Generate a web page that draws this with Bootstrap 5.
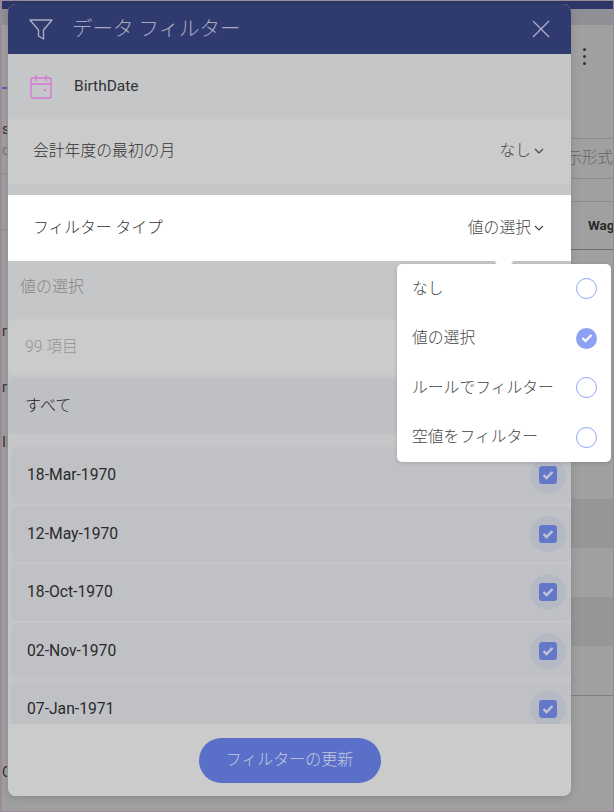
<!DOCTYPE html>
<html lang="ja">
<head>
  <meta charset="UTF-8">
  <title>データ フィルター</title>
  <link rel="stylesheet" href="https://cdn.jsdelivr.net/npm/bootstrap@5.3.0/dist/css/bootstrap.min.css">
  <style>
    html, body { height: 100%; }
    body { background: #a0a0a0; font-family: Roboto, "Noto Sans CJK JP", sans-serif; overflow: hidden; }
    .screen { position: relative; width: 614px; height: 812px; border: 1px solid #9a8a9a; border-left-width: 2px; overflow: hidden; }
    .back-top { height: 8px; background: #2c3768; }
    .back-sub { height: 16px; background: #8f9095; }

    /* what shows on both sides of the dialog */
    .side-left { width: 5px; font-size: 14px; line-height: 18px; color: #333; white-space: nowrap; }
    .side-right { width: 42px; white-space: nowrap; }
    .blue-tick { height: 2px; background: #5566b8; margin-top: 62px; }
    .left-s { margin-top: 31px; }
    .left-c { margin-top: 3px; color: #777; }
    .left-line { border-top: 1px solid #8c8c8c; margin-top: 14px; }
    .left-line2 { border-top: 1px solid #8c8c8c; margin-top: 55px; }
    .left-n1 { margin-top: 92px; }
    .left-n2 { margin-top: 38px; }
    .left-id { margin-top: 37px; }
    .left-o { margin-top: 312px; }
    .side-band { height: 113px; padding: 23px 0 0 12px; }
    .menu-dot { display: block; width: 3px; height: 3px; border-radius: 50%; background: #333; margin-bottom: 4px; }
    .right-a { height: 40px; border-top: 1px solid #8c8c8c; font-size: 15.500px; font-weight: 300; color: #666; }
    .right-b { height: 23px; border-top: 1px solid #8c8c8c; }
    .right-c { height: 48px; border-top: 1px solid #8c8c8c; padding-left: 17px; font-size: 13.500px; font-weight: 700; color: #2a2a2a; }
    .right-d { height: 201px; border-top: 1px solid #6e6e6e; }
    .stripe-a { height: 49px; background: #a0a0a0; }
    .stripe-b { height: 49px; background: #969696; }
    .stripe-end { border-top: 1px solid #808080; }

    .dialog { position: absolute; left: 6px; top: 3px; width: 563px; height: 792px; background: #c5c6c8; border-radius: 8px; overflow: hidden; box-shadow: 0 2px 8px rgba(0,0,0,.15); }
    .dlg-head { height: 50px; background: #2f3a6e; color: #a9acc0; padding: 0 21px 0 20px; }
    .dlg-title { font-size: 20.500px; font-weight: 300; margin-left: 18px; }
    .field-row { height: 65px; padding-left: 22px; }
    .field-name { font-size: 15.500px; font-weight: 400; color: #333; margin-left: 22px; }
    .opt-row { height: 65px; background: #cbcbcb; padding: 0 27px 2px 25px; margin-bottom: 11px; font-size: 15.800px; font-weight: 300; color: #333; }
    .opt-white { height: 66px; background: #fff; padding: 0 27px 0 25px; font-size: 15.800px; font-weight: 300; color: #333; }
    .picked { color: #444; }
    .picked svg { margin-left: 3px; }
    .sec-title { height: 58px; padding-left: 12px; padding-top: 14px; font-size: 16px; font-weight: 300; color: #858585; }
    .tile { height: 56px; border-radius: 6px; margin-bottom: 3px; padding-left: 17px; }
    .tile-count { background: #cbcbcb; color: #949494; font-size: 15.700px; font-weight: 300; }
    .tile-all { background: #bfc0c4; color: #222; font-size: 16px; font-weight: 300; margin-bottom: 13px; }
    .date-list { padding-left: 3px; }
    .date-tile { height: 56.500px; background: #c0c1c5; border-radius: 6px; margin-bottom: 2px; padding: 0 5px 0 16px; font-size: 15.700px; color: #2a2a2a; }
    .tick-halo { width: 36px; height: 36px; border-radius: 50%; background: #b5b9c4; }
    .tick-box { width: 18px; height: 18px; border-radius: 3px; background: #6478c9; }
    .dlg-foot { position: absolute; left: 0; right: 0; bottom: 0; height: 72px; background: #cbcbcb; }
    .btn-update { width: 182px; height: 45px; border-radius: 23px; background: #5a6fc8; border: 0; color: #c5cae0; font-size: 16px; font-weight: 300; padding: 0; }
    .btn-update:hover { background: #5a6fc8; color: #c5cae0; }

    .type-menu { position: absolute; left: 395px; top: 263px; width: 214px; height: 198px; background: #fff; border-radius: 5px; padding: 0 14px 0 15px; box-shadow: 0 1px 4px rgba(0,0,0,.15); font-size: 15.800px; font-weight: 300; color: #444; }
    .type-menu::before { content: ""; position: absolute; left: 99px; top: -10px; width: 16px; height: 16px; background: #fff; transform: rotate(45deg) scale(.8); }
    .menu-item { height: 49.500px; }
    .radio-ring { width: 21px; height: 21px; border-radius: 50%; border: 1.500px solid #8da2f5; background: #fff; }
    .radio-on { width: 21px; height: 21px; border-radius: 50%; background: #8da2f5; }
  </style>
</head>
<body>
<div class="screen">
  <div class="back-top"></div>
  <div class="back-sub"></div>
  <div class="d-flex justify-content-between">
    <div class="side-left overflow-hidden">
      <div class="blue-tick"></div>
      <div class="left-s">s</div>
      <div class="left-c">c</div>
      <div class="left-line"></div>
      <div class="left-line2"></div>
      <div class="left-n1">n</div>
      <div class="left-n2">n</div>
      <div class="left-id">ID</div>
      <div class="left-o">O</div>
    </div>
    <div class="side-right overflow-hidden">
      <div class="side-band">
        <span class="menu-dot"></span>
        <span class="menu-dot"></span>
        <span class="menu-dot"></span>
      </div>
      <div class="right-a d-flex align-items-center justify-content-end">表示形式</div>
      <div class="right-b"></div>
      <div class="right-c d-flex align-items-center">Wag</div>
      <div class="right-d"></div>
      <div class="stripe-a"></div>
      <div class="stripe-b"></div>
      <div class="stripe-a"></div>
      <div class="stripe-b"></div>
      <div class="stripe-a"></div>
      <div class="stripe-end"></div>
    </div>
  </div>

  <div class="dialog">
    <div class="dlg-head d-flex align-items-center">
      <svg width="26" height="26" viewBox="0 0 26 26" fill="none" stroke="#a9acc0" stroke-width="1.400" stroke-linejoin="round"><path d="M2 4h22l-8.500 10v9l-5-3v-6z"/></svg>
      <span class="dlg-title flex-grow-1">データ フィルター</span>
      <svg width="18" height="18" viewBox="0 0 18 18" stroke="#a9acc0" stroke-width="1.400"><path d="M1 1l16 16M17 1L1 17"/></svg>
    </div>
    <div class="field-row d-flex align-items-center">
      <svg width="22" height="24" viewBox="0 0 22 24" fill="none" stroke="#d774d8" stroke-width="1.300"><rect x="1" y="3" width="20" height="20" rx="2"/><path d="M1 9h20M6 0v6M16 0v6"/><rect x="14" y="14" width="2" height="2" fill="#d774d8" stroke="none"/></svg>
      <span class="field-name">BirthDate</span>
    </div>
    <div class="opt-row d-flex align-items-center justify-content-between">
      <span>会計年度の最初の月</span>
      <span class="picked">なし<svg width="10" height="7" viewBox="0 0 10 7" fill="none" stroke="#444" stroke-width="1.200"><path d="M1 1l4 4 4-4"/></svg></span>
    </div>
    <div class="opt-white d-flex align-items-center justify-content-between">
      <span>フィルター タイプ</span>
      <span class="picked">値の選択<svg width="10" height="7" viewBox="0 0 10 7" fill="none" stroke="#444" stroke-width="1.200"><path d="M1 1l4 4 4-4"/></svg></span>
    </div>
    <div class="sec-title">値の選択</div>
    <div class="tile tile-count d-flex align-items-center">99 項目</div>
    <div class="tile tile-all d-flex align-items-center">すべて</div>
    <div class="date-list" id="dates"></div>
    <div class="dlg-foot d-flex align-items-center justify-content-center">
      <button class="btn btn-update">フィルターの更新</button>
    </div>
  </div>

  <div class="type-menu">
    <div class="menu-item d-flex align-items-center justify-content-between"><span>なし</span><span class="radio-ring"></span></div>
    <div class="menu-item d-flex align-items-center justify-content-between"><span>値の選択</span>
      <span class="radio-on d-flex align-items-center justify-content-center"><svg width="12" height="10" viewBox="0 0 12 10" fill="none" stroke="#fff" stroke-width="2.200"><path d="M1.500 5l3 3 6-6"/></svg></span></div>
    <div class="menu-item d-flex align-items-center justify-content-between"><span>ルールでフィルター</span><span class="radio-ring"></span></div>
    <div class="menu-item d-flex align-items-center justify-content-between"><span>空値をフィルター</span><span class="radio-ring"></span></div>
  </div>
</div>

<script>
const dates = ["18-Mar-1970", "12-May-1970", "18-Oct-1970", "02-Nov-1970", "07-Jan-1971"];
document.getElementById("dates").innerHTML = dates.map(d => `
  <div class="date-tile d-flex align-items-center justify-content-between">
    <span>${d}</span>
    <span class="tick-halo d-flex align-items-center justify-content-center">
      <span class="tick-box d-flex align-items-center justify-content-center">
        <svg width="12" height="10" viewBox="0 0 12 10" fill="none" stroke="#c5c7d4" stroke-width="2.300"><path d="M1.500 5l3 3 6-6"/></svg>
      </span>
    </span>
  </div>`).join("");
</script>
<script src="https://cdn.jsdelivr.net/npm/bootstrap@5.3.0/dist/js/bootstrap.bundle.min.js"></script>
</body>
</html>
